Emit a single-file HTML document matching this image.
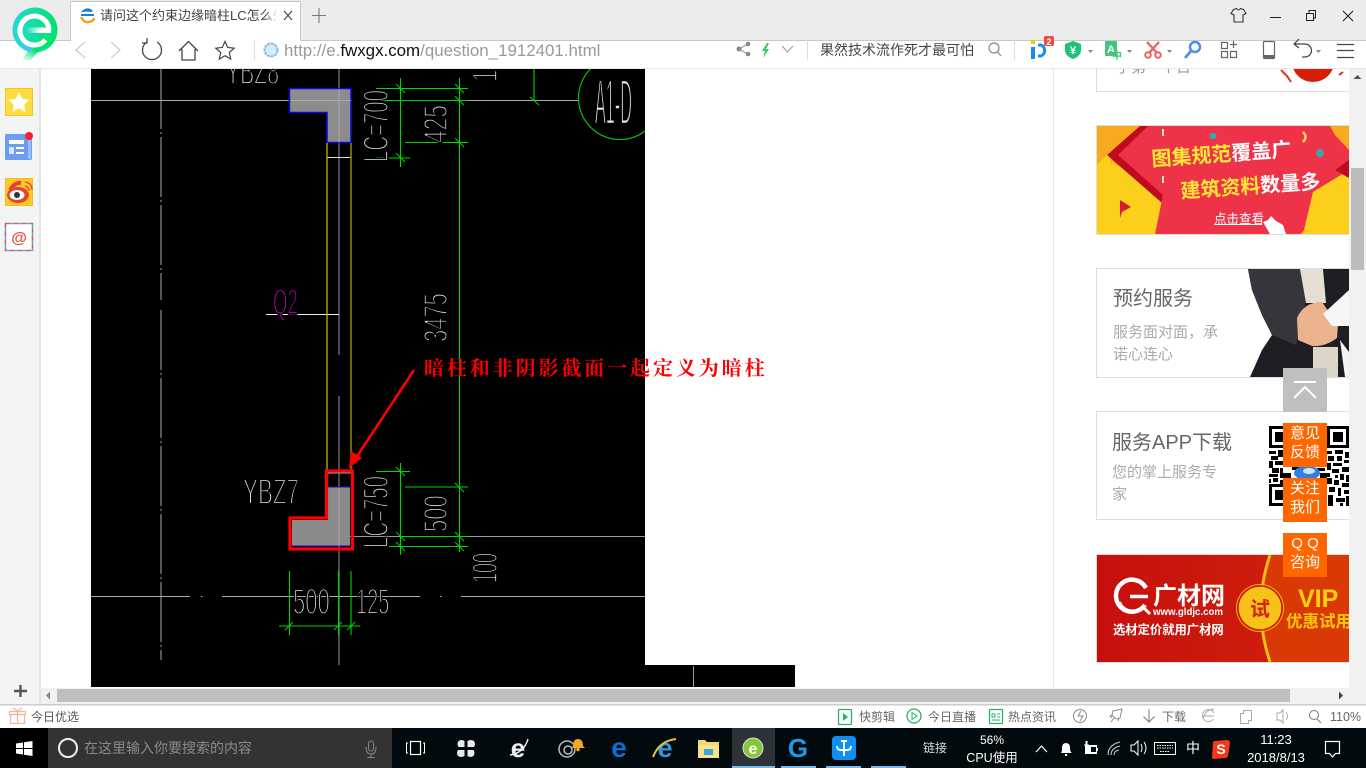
<!DOCTYPE html>
<html><head><meta charset="utf-8"><title>请问这个约束边缘暗柱LC怎么处理</title>
<style>
html,body{margin:0;padding:0;width:1366px;height:768px;overflow:hidden;background:#fff}
svg{position:absolute;left:0;top:0;display:block}
text{font-family:"Liberation Sans","Noto Sans CJK SC",sans-serif}
.cad{font-family:"Liberation Sans",sans-serif;font-size:20px;fill:#e6e6e6;stroke:#000;stroke-width:1.05px;paint-order:fill}
.s{font-size:12px;fill:#666}
.t{font-size:12px;fill:#fff}
.o{font-size:15px;fill:#fff;text-anchor:middle}
</style></head><body>
<svg width="1366" height="768" viewBox="0 0 1366 768" xmlns="http://www.w3.org/2000/svg">
<defs>
<linearGradient id="lg" x1="0" x2="1" y1="0" y2="0"><stop offset="0" stop-color="#28d6d8"/><stop offset="1" stop-color="#00e46a"/></linearGradient>
<linearGradient id="bar" x1="0" x2="1" y1="0" y2="0"><stop offset="0" stop-color="#fff" stop-opacity="0"/><stop offset=".6" stop-color="#fff"/><stop offset="1" stop-color="#fff"/></linearGradient>
<linearGradient id="tail" x1="1" x2="0" y1="0" y2="1"><stop offset="0" stop-color="#00e46a"/><stop offset=".6" stop-color="#00e46a"/><stop offset="1" stop-color="#fff"/></linearGradient>
<linearGradient id="fade" x1="0" x2="1"><stop offset="0" stop-color="#fff" stop-opacity="0"/><stop offset="1" stop-color="#fff"/></linearGradient>
<linearGradient id="red5" x1="0" x2="1"><stop offset="0" stop-color="#c70f0d"/><stop offset="1" stop-color="#d0240a"/></linearGradient>
<clipPath id="cadclip"><rect x="91" y="69" width="554" height="618"/></clipPath>
<clipPath id="ad2"><rect x="1097" y="126" width="252" height="108"/></clipPath>
<clipPath id="ad3"><rect x="1097" y="269" width="252" height="108"/></clipPath>
<clipPath id="ad5"><rect x="1097" y="555" width="252" height="107"/></clipPath>
</defs>

<!-- CAD -->
<rect x="91" y="69" width="554" height="618" fill="#000"/>
<rect x="645" y="665" width="150" height="22" fill="#000"/>
<rect x="693" y="666" width="1" height="21" fill="#999"/>
<g clip-path="url(#cadclip)">
<g fill="none" stroke-width="1">
<path d="M91 100.500H290M468 100.500H578" stroke="#aaa"/>
<path d="M161 69V300M161 310V660" stroke="#aaa" stroke-dasharray="60 3 2 3"/>
<path d="M339 69V142M339 142V355M339 396V665" stroke="#999"/>
<path d="M91 596.500H190M222 596.500H420M461 596.500H645" stroke="#aaa"/>
<path d="M201 596.500h1.500M440 596.500h1.500" stroke="#aaa"/>
<path d="M339 536.500H645" stroke="#999"/>
<path d="M266 314.500H339" stroke="#eee"/>
<path d="M327 157.500H351" stroke="#ddd"/>
</g>
<path d="M289.500 88.500H351V142.500H327V112.500H289.500Z" fill="#8c8c8c" stroke="#0a0ae0" stroke-width="1.500"/>
<path d="M291 100.500H351M339 89V142" stroke="#aaa" stroke-width="1"/>
<path d="M327 143V471" stroke="#c8b400" stroke-width="1.300"/>
<path d="M351 143V471" stroke="#a8a000" stroke-width="1.300"/>
<path d="M328 487H350V546H292V520H328Z" fill="#8a8a8a"/>
<path d="M328 487H350M292 546H350M291 517H326" stroke="#1010e0" stroke-width="1" fill="none"/>
<path d="M339 488V546" stroke="#aaa"/>
<path d="M327 473H351" stroke="#aaa" stroke-width="1"/>
<path d="M326.500 471H352.500V549H290V518H326.500Z" fill="none" stroke="#f00" stroke-width="3.200"/>
<g fill="none" stroke="#00d800" stroke-width="1.100">
<path d="M400.500 78V167M376 88.500H468M376 100.500H468M405 142.500H468M376 158H410M459.500 78V552"/>
<path d="M400.500 463V555M376 471.500H410M405 487H468M400 536.500H468M388 546.500H468"/>
<path d="M279 626H360M289.500 571V635M338.500 571V635M351 571V635"/>
<path d="M534 69V101M530 97l9 8"/>
<circle cx="620" cy="98" r="41.500"/>
<path d="M396 84l9 9M455 84l9 9M455 96l9 9M455 138l9 9M396 153l9 9M396 467l9 9M396 532l9 9M396 542l9 9M455 483l9 9M455 532l9 9M455 542l9 9" stroke-width=".9"/>
<path d="M285 630l8 -8M334 630l8 -8M347 630l8 -8" stroke-width=".9"/>
</g>
<text class="cad" transform="translate(226,84) scale(1.06,1.82)">YBZ8</text>
<text class="cad" transform="translate(595,124) scale(.81,3.2)" style="stroke-width:.8px">A1-D</text>
<text class="cad" style="fill:#d000d0" transform="translate(273,314) scale(.93,1.75)">Q2</text>
<text class="cad" transform="translate(388,162) rotate(-90) scale(1.02,1.75)">LC=700</text>
<text class="cad" transform="translate(447,143) rotate(-90) scale(1.14,1.68)">425</text>
<text class="cad" transform="translate(447,342) rotate(-90) scale(1.1,1.68)">3475</text>
<text class="cad" transform="translate(497,82) rotate(-90) scale(1.1,1.75)">125</text>
<text class="cad" transform="translate(243,504) scale(1.12,1.82)">YBZ7</text>
<text class="cad" transform="translate(388,548) rotate(-90) scale(1.02,1.75)">LC=750</text>
<text class="cad" transform="translate(447,532) rotate(-90) scale(1.1,1.68)">500</text>
<text class="cad" transform="translate(497,583) rotate(-90) scale(.9,1.75)">100</text>
<text class="cad" transform="translate(293,614) scale(1.1,1.82)">500</text>
<text class="cad" transform="translate(356,614) scale(1,1.82)">125</text>
<path d="M414 370L354 461" stroke="#f00" stroke-width="2.600" fill="none"/>
<path d="M349 468L351 451L362 458Z" fill="#f00"/>
</g>
<text x="424" y="375" style="font-family:'Noto Serif CJK SC','Liberation Serif',serif;font-weight:700;font-size:20px;letter-spacing:2.9px;fill:#f00">暗柱和非阴影截面一起定义为暗柱</text>

<!-- separator column -->
<rect x="1053" y="69" width="1" height="619" fill="#e6e6e6"/>

<!-- ad 1 -->
<path d="M1096.500 69V91.500H1349" fill="none" stroke="#ddd"/>
<text x="1116" y="72" style="font-size:15px;fill:#999">手第一个日</text>
<ellipse cx="1313" cy="62" rx="21" ry="20" fill="#d81e06"/>
<path d="M1281 70l6 6 4 6M1343 72l-4 3" stroke="#e0301a" stroke-width="2" fill="none"/>

<!-- ad 2 -->
<rect x="1096.500" y="125.500" width="253" height="109" fill="#f8a91d" stroke="#ddd"/>
<g clip-path="url(#ad2)">
<path d="M1097 165L1112 150L1097 290ZM1112 162L1165 195V234H1097V200Z" fill="#fdcf1d"/>
<path d="M1107 155L1140 126H1170L1162 203Z" fill="#bf0a20"/>
<path d="M1118 155L1148 126H1330L1349 146V192L1300 234H1155L1163 195Z" fill="#ee3348"/>
<path d="M1313 192L1349 170V234H1303Z" fill="#fdcf1d"/>
<path d="M1330 126H1349V150L1335 135Z" fill="#f8a91d"/>
<path d="M1318 126L1349 160V178L1335 170L1349 160Z" fill="#bf0a20"/>
<path d="M1120 200L1131 207L1122 212L1120 218Z" fill="#d51c30"/>
<circle cx="1213" cy="136" r="3.500" fill="#3fa3a8"/><circle cx="1320" cy="153" r="4" fill="#3fa3a8"/>
<rect x="1162" y="129" width="2" height="7" fill="#ffe9b0"/><rect x="1162" y="176" width="2" height="7" fill="#ffe9b0"/>
<path d="M1303 132q5 5 0 10" stroke="#ffd45a" stroke-width="2.400" fill="none"/>
<text transform="translate(1152,166) rotate(-4)" style="font-size:20px;font-weight:700;fill:#ffe936">图集规范<tspan fill="#fff">覆盖广</tspan></text>
<text transform="translate(1181,198) rotate(-4)" style="font-size:20px;font-weight:700;fill:#ffe936">建筑资料<tspan fill="#fff">数量多</tspan></text>
<text x="1214" y="223" style="font-size:12.500px;fill:#fff">点击查看</text>
<rect x="1214" y="224" width="48" height="1" fill="#fff"/>
<path d="M1263 222l5 -2 3 -4 5 5 7 4 3 9h-16z" fill="#fff"/>
</g>

<!-- ad 3 -->
<rect x="1096.500" y="268.500" width="253" height="109" fill="#fff" stroke="#ddd"/>
<text x="1113" y="305" style="font-size:20px;fill:#666">预约服务</text>
<text x="1113" y="337" style="font-size:15px;fill:#aaa">服务面对面，承</text>
<text x="1113" y="359" style="font-size:15px;fill:#aaa">诺心连心</text>
<g clip-path="url(#ad3)">
<path d="M1248 269H1349V377H1250L1262 350L1272 335L1262 315L1252 290Z" fill="#1e1d24"/>
<path d="M1248 269H1300L1306 300L1296 345L1272 335L1262 315L1252 290Z" fill="#35353c"/>
<path d="M1300 269H1323L1326 303H1306Z" fill="#e6dfd4"/>
<path d="M1313 347H1338L1338 377H1313Z" fill="#dcd6c8"/>
<path d="M1297 318Q1304 302 1322 302L1338 325L1337 338Q1325 347 1312 346L1298 340Z" fill="#eab38d"/>
<path d="M1323 314L1349 290V326L1332 326Z" fill="#f8f5f6"/>
<path d="M1340 340L1349 352V377H1345Z" fill="#f6f3f4"/>
</g>

<!-- ad 4 -->
<rect x="1096.500" y="411.500" width="253" height="108" fill="#fff" stroke="#ddd"/>
<text x="1112" y="449" style="font-size:20px;fill:#666">服务APP下载</text>
<text x="1112" y="477" style="font-size:15px;fill:#aaa">您的掌上服务专</text>
<text x="1112" y="499" style="font-size:15px;fill:#aaa">家</text>
<g fill="#000">
<path fill-rule="evenodd" d="M1269 426h22v22h-22zM1272 429v16h16v-16zM1275 432h10v10h-10zM1327 426h22v22h-22zM1330 429v16h16v-16zM1333 432h10v10h-10zM1269 484h22v22h-22zM1272 487v16h16v-16zM1275 490h10v10h-10z"/>
<path d="M1269 451h7v3h-7zM1278 450h5v7h-5zM1271 456h7v4h-7zM1269 461h4v7h-4zM1275 461h8v4h-8zM1272 468h7v5h-7zM1269 474h9v3h-9zM1280 468h3v10h-3zM1273 478h5v4h-5zM1280 480h3v4h-3zM1269 479h2v4h-2z"/>
<path d="M1327 451h5v3h-5zM1335 450h8v4h-8zM1345 452h4v6h-4zM1328 456h6v5h-6zM1337 456h5v5h-5zM1344 460h5v3h-5zM1327 463h4v7h-4zM1333 463h9v3h-9zM1342 467h7v5h-7zM1332 469h7v4h-7zM1327 473h3v4h-3zM1327 478h5v6h-5zM1335 475h3v3h-3zM1340 474h4v6h-4zM1346 475h3v7h-3zM1334 480h5v5h-5zM1342 483h7v4h-7zM1329 487h6v5h-6zM1338 488h3v8h-3zM1344 490h5v4h-5zM1328 495h5v11h-5zM1336 498h9v4h-9zM1346 496h3v10h-3zM1340 503h3v3h-3z"/>
<path d="M1292 467h8v3h-8zM1317 468h8v3h-8zM1320 473h7v5h-7zM1283 473h8v5h-8z"/>
</g>
<ellipse cx="1307" cy="473" rx="13" ry="7" fill="#2f7fe6"/><ellipse cx="1309" cy="471" rx="6" ry="3" fill="#cfe4ff"/>

<!-- ad 5 -->
<rect x="1096.500" y="554.500" width="253" height="108" fill="url(#red5)" stroke="#ddd"/>
<g clip-path="url(#ad5)">
<path d="M1270 555Q1252 608 1270 662H1349V555Z" fill="#d83905"/>
<path d="M1270 555Q1252 608 1270 662" stroke="#eec012" stroke-width="3" fill="none"/>
<circle cx="1260" cy="608" r="22" fill="#f7c318" stroke="#cf1c08" stroke-width="1.500"/>
<circle cx="1260" cy="608" r="23.500" fill="none" stroke="#efb40f" stroke-width="1"/>
<text x="1260" y="616" text-anchor="middle" style="font-size:20px;font-weight:700;fill:#d32108">试</text>
<path d="M1146 588A16 16 0 1 0 1145 605" fill="none" stroke="#fff" stroke-width="4.500"/>
<path d="M1120 602A13 13 0 0 0 1136 610" fill="none" stroke="#fff" stroke-width="2"/>
<path d="M1130 596.500H1148" stroke="#fff" stroke-width="3.500"/>
<path d="M1143 607l7 7" stroke="#fff" stroke-width="3"/>
<text x="1153" y="604" style="font-size:24px;font-weight:700;fill:#fff">广材网</text>
<text x="1153" y="615" style="font-size:10px;font-weight:700;fill:#fff" textLength="70" lengthAdjust="spacingAndGlyphs">www.gldjc.com</text>
<text x="1113" y="634" style="font-size:12.300px;font-weight:700;fill:#fff">选材定价就用广材网</text>
<text x="1298" y="607" style="font-size:25px;font-weight:700;fill:#ffd20a">VIP</text>
<text x="1286" y="627" style="font-size:16.500px;font-weight:700;fill:#ffc80a">优惠试用</text>
</g>

<!-- floating buttons -->
<rect x="1283" y="368" width="44" height="44" fill="#bfbfbf"/>
<path d="M1294 382H1316M1294 398L1305 387L1316 398" fill="none" stroke="#fff" stroke-width="2"/>
<rect x="1283" y="423" width="44" height="44" fill="#ff6600"/>
<rect x="1283" y="478" width="44" height="44" fill="#ff6600"/>
<rect x="1283" y="533" width="44" height="44" fill="#ff6600"/>
<text class="o" x="1305" y="438">意见</text><text class="o" x="1305" y="457">反馈</text>
<text class="o" x="1305" y="493">关注</text><text class="o" x="1305" y="512">我们</text>
<text class="o" x="1305" y="548">Q Q</text><text class="o" x="1305" y="567">咨询</text>

<!-- vertical scrollbar -->
<rect x="1349" y="69" width="17" height="619" fill="#f1f1f1"/>
<rect x="1351" y="168" width="13" height="102" fill="#bcbcbc"/>
<path d="M1357.500 75l4 4h-8z" fill="#555"/>

<!-- left sidebar -->
<rect x="0" y="69" width="40" height="636" fill="#f3f5f4"/>
<rect x="39" y="69" width="2" height="636" fill="#e4e4e4"/>
<rect x="5.500" y="88.500" width="27" height="27" fill="#fedb3f" stroke="#f8c423"/>
<path d="M19 92l3.200 6.800 7.300 .9 -5.400 5 1.400 7.300 -6.500 -3.600 -6.500 3.600 1.400 -7.300 -5.400 -5 7.300 -.9z" fill="#fff"/>
<rect x="5" y="134" width="27" height="26" rx="1.500" fill="#6d9cf5"/>
<rect x="9" y="140" width="15" height="4" fill="#fff"/><rect x="9" y="147" width="5" height="7" rx="1" fill="#d8e6ff"/><rect x="16" y="147" width="8" height="2" fill="#fff"/><rect x="16" y="152" width="8" height="2" fill="#fff"/>
<rect x="28" y="140" width="3" height="19" fill="#9cbdf8"/>
<circle cx="29" cy="136" r="4" fill="#f5222d"/>
<rect x="5.500" y="178.500" width="27" height="27" fill="#fdc82a" stroke="#f8b91f"/>
<ellipse cx="18" cy="195" rx="11" ry="8" fill="#e8412e"/>
<path d="M10 190q5 -8 11 -7" stroke="#e8412e" stroke-width="4" fill="none"/>
<ellipse cx="17" cy="195" rx="7.500" ry="5" fill="#fff"/><circle cx="17" cy="195" r="3" fill="#333"/>
<path d="M25 186q4 1 4 5M25 182q7 1 7 8" stroke="#e8412e" stroke-width="1.300" fill="none"/>
<rect x="5.500" y="223.500" width="27" height="27" fill="#fff" stroke="#ee5a4a" stroke-width="1.600" stroke-dasharray="4 4"/>
<rect x="5.500" y="223.500" width="27" height="27" fill="none" stroke="#58b0f0" stroke-width="1.600" stroke-dasharray="4 4" stroke-dashoffset="4"/>
<text x="19" y="243" text-anchor="middle" style="font-size:16px;font-weight:700;fill:#e8503c">@</text>

<!-- horizontal scrollbar -->
<rect x="41" y="688" width="1325" height="16" fill="#f1f1f1"/>
<rect x="57" y="689" width="1233" height="13" fill="#bfbfbf"/>
<path d="M46 695.500l4 -4v8z" fill="#888"/><path d="M1343 695.500l-4 -4v8z" fill="#444"/>
<path d="M14 691H27M20.500 685V697" stroke="#555" stroke-width="2.400"/>

<!-- status bar -->
<rect x="0" y="704" width="1366" height="24" fill="#fff"/>
<rect x="0" y="704" width="1366" height="1.500" fill="#ccc"/>
<g fill="none" stroke="#f6b59a" stroke-width="1.200">
<rect x="10.500" y="714.500" width="14" height="9"/><rect x="9.500" y="711.500" width="16" height="3"/>
<path d="M17.500 711V724M13 708l4.500 3 4.500 -3"/></g>
<text class="s" x="31" y="721" style="fill:#555">今日优选</text>
<rect x="838.500" y="709.500" width="13" height="15" rx="1" fill="#fff" stroke="#27b36a" stroke-width="1.300"/><path d="M843 713l5 4 -5 4z" fill="#27b36a"/>
<text class="s" x="859" y="721">快剪辑</text>
<circle cx="914" cy="716" r="7" fill="none" stroke="#27b36a" stroke-width="1.300"/><path d="M912 712.500l5 3.500 -5 3.500z" fill="none" stroke="#27b36a"/>
<text class="s" x="928" y="721">今日直播</text>
<rect x="989.500" y="709.500" width="13" height="14" rx="1" fill="none" stroke="#27b36a" stroke-width="1.300"/><path d="M992 714h3v3h-3zM997 714h3M997 717h3M992 720h8" fill="none" stroke="#27b36a"/>
<text class="s" x="1008" y="721">热点资讯</text>
<circle cx="1080" cy="716" r="6.500" fill="none" stroke="#888"/><path d="M1081 711l-3 5h5l-3 5" fill="none" stroke="#888"/>
<path d="M1111 722l3 -4M1113 711l9 -2 -2 9 -4 1 -4 -4zM1112 715l-2 1 2 2M1119 718l-1 3" fill="none" stroke="#888"/>
<path d="M1149 709V722M1143.500 716.500l5.500 5.500 5.500 -5.500" fill="none" stroke="#777"/>
<text class="s" x="1162" y="721">下载</text>
<path d="M1214 713a6 6 0 1 0 -.5 6M1203 716h11M1214 709q-8 0 -11 10" fill="none" stroke="#aaa"/>
<path d="M1240.500 713.500h3v-3h8v10h-3v3h-8z" fill="none" stroke="#aaa"/>
<path d="M1277 713h3l3 -3v13l-3 -3h-3zM1286 712q3 4 0 8" fill="none" stroke="#aaa"/>
<circle cx="1314" cy="715" r="4.500" fill="none" stroke="#777"/><path d="M1317 719l4 4" stroke="#777"/>
<text class="s" x="1330" y="721" style="font-size:12.500px">110%</text>

<!-- taskbar -->
<rect x="0" y="728" width="1366" height="40" fill="#020a0e"/>
<rect x="0" y="728" width="48" height="40" fill="#000"/>
<rect x="48" y="728" width="344" height="40" fill="#333"/>
<path d="M16 743.500l7 -1V748h-7zM24 742.300l8.500 -1.300V748H24zM16 749h7v5.500l-7 -1zM24 749h8.500v7l-8.500 -1.300z" fill="#fff"/>
<circle cx="68" cy="748" r="9" fill="none" stroke="#eee" stroke-width="2"/>
<text x="84" y="753" style="font-size:14px;fill:#8a8a8a">在这里输入你要搜索的内容</text>
<rect x="368.500" y="741" width="5" height="10" rx="2.500" fill="none" stroke="#888"/><path d="M366 747q0 7 5 7t5 -7M371 754v3M367.500 757.500h7" fill="none" stroke="#888"/>
<rect x="410.500" y="741.500" width="10" height="13" fill="none" stroke="#fff" stroke-width="1.200"/><path d="M408 743h-1.500v10H408M423 743h1.500v10H423" fill="none" stroke="#fff"/>
<path d="M464.500 747V741q-3 -2 -6 0 -2 3 0 6zM467.500 747H474q2 -3 0 -6 -3 -2 -6.500 0zM464.500 750H458q-2 3 0 6 3 2 6.500 0zM467.500 750V756q3 2 6 0 2 -3 0 -6z" fill="#e8e8e8"/>
<text x="518" y="757" text-anchor="middle" style="font-size:26px;fill:#eee;font-weight:700">e</text>
<path d="M510 755q14 -2 18 -16" stroke="#eee" stroke-width="1.400" fill="none"/>
<circle cx="567" cy="749" r="8" fill="none" stroke="#bbb" stroke-width="1.500"/><circle cx="568" cy="750" r="4" fill="none" stroke="#bbb" stroke-width="1.500"/>
<path d="M573 746q0 -7 5 -7t5 7l2 2h-14z" fill="#f0a820"/><circle cx="578" cy="749.500" r="1.800" fill="#f0a820"/>
<text x="619" y="757" text-anchor="middle" style="font-size:28px;fill:#0b6fd8;font-weight:700">e</text>
<text x="665" y="757" text-anchor="middle" style="font-size:27px;fill:#2f9ae4;font-weight:700">e</text>
<path d="M653 757q6 -16 23 -18" stroke="#e8c230" stroke-width="2" fill="none"/>
<path d="M698 740h7l2 2h12v16h-21z" fill="#f5d77a"/><rect x="698" y="745" width="21" height="13" fill="#f9e08a"/><rect x="704" y="749" width="9" height="6" fill="#3aa5dc"/>
<rect x="732" y="728" width="43" height="40" fill="#2c3236"/>
<circle cx="753" cy="748" r="10" fill="#86c63a" stroke="#ddd"/><text x="753" y="754" text-anchor="middle" style="font-size:16px;fill:#fff;font-weight:700">e</text>
<text x="798" y="757" text-anchor="middle" style="font-size:26px;font-weight:700;fill:#1a9be6">G</text>
<rect x="832" y="736" width="24" height="24" rx="4" fill="#0f8ff2"/><path d="M844 740V756M837 746q0 4 4 4h6q4 0 4 -4M841 741h6" fill="none" stroke="#fff" stroke-width="2"/>
<rect x="732" y="766" width="43" height="2" fill="#76b9ed"/><rect x="781" y="766" width="35" height="2" fill="#76b9ed"/><rect x="826" y="766" width="35" height="2" fill="#76b9ed"/><rect x="871" y="766" width="35" height="2" fill="#76b9ed"/>
<text class="t" x="923" y="752" style="fill:#ddd">链接</text>
<text class="t" x="992" y="744" text-anchor="middle">56%</text>
<text class="t" x="992" y="762" text-anchor="middle" style="font-size:12.500px">CPU使用</text>
<path d="M1036 752l5.500 -6 5.500 6" fill="none" stroke="#fff" stroke-width="1.200"/>
<path d="M1061 753q1 -1 1 -5 0 -5 4 -5t4 5q0 4 2 5zM1065 754h2v2h-2z" fill="#fff"/>
<path d="M1084 745h5M1086 741v4M1087 741v4" stroke="#fff" stroke-width="1" fill="none"/><rect x="1085" y="745" width="12" height="9" fill="#fff"/><rect x="1097" y="748" width="1" height="3" fill="#fff"/><rect x="1091" y="747" width="5" height="5" fill="#020a0e"/>
<path d="M1108 755q0 -10 12 -13M1111 755q0 -7 9 -9M1114 755q0 -4 5 -5M1118 755v.1" fill="none" stroke="#ccc" stroke-width="1.100"/>
<path d="M1131 745h3l4 -4v14l-4 -4h-3zM1141 744q2 4 0 8M1144 742q4 6 0 12" fill="none" stroke="#fff"/>
<rect x="1154.500" y="742.500" width="21" height="12" fill="none" stroke="#fff"/><path d="M1157 745.500h16M1157 748h16M1160 751.500h10" stroke="#fff" stroke-dasharray="1.500 1"/>
<text class="t" x="1186" y="753" style="font-size:14px">中</text>
<path d="M1215 741l12 -1q3 0 3 3l-2 13q-1 2 -3 2l-11 1q-2 0 -2 -2l1 -14q0 -2 2 -2z" fill="#f03a1a"/><text x="1221" y="754" text-anchor="middle" style="font-size:14px;font-weight:700;fill:#fff">S</text>
<text class="t" x="1276" y="744" text-anchor="middle" style="font-size:13px">11:23</text>
<text class="t" x="1276" y="762" text-anchor="middle" style="font-size:13px">2018/8/13</text>
<path d="M1325.500 741.500h14v12h-4l-3 3.500 -3 -3.500h-4z" fill="none" stroke="#fff" stroke-width="1.200"/>

<!-- top chrome -->
<rect x="0" y="0" width="1366" height="69" fill="#fff"/>
<rect x="0" y="0" width="1366" height="30" fill="#ececec"/>
<rect x="0" y="30" width="1366" height="0" fill="#ececec"/>
<rect x="0" y="30" width="1366" height="10" fill="#ececec"/>
<rect x="0" y="40" width="1366" height="1" fill="#c8c8c8"/>
<rect x="0" y="68" width="1366" height="1" fill="#e6e6e6"/>
<path d="M70.500 41V1.500H300.500V41" fill="#fff" stroke="#c8c8c8"/>
<rect x="71" y="38" width="229" height="4" fill="#fff"/>
<path d="M93 11a7 7 0 0 0 -12 2q2 -2 10 -1z" fill="#1a80d8"/><path d="M81 15h13" stroke="#1a80d8" stroke-width="2"/>
<path d="M81 17q3 6 8 5t5 -4" fill="none" stroke="#f0a020" stroke-width="2.400"/>
<text x="100" y="20" style="font-size:13px;fill:#444">请问这个约束边缘暗柱LC怎么处理</text>
<rect x="265" y="6" width="12" height="24" fill="url(#fade)"/><rect x="277" y="6" width="22" height="24" fill="#fff"/>
<path d="M284 11l8 9M292 11l-8 9" stroke="#444" stroke-width="1.100"/>
<path d="M319 8V23M312 15.500H326" stroke="#777" stroke-width="1.100"/>
<!-- logo -->
<path d="M56 36Q50 46 40 50L30 60H22L29 49L40 42Z" fill="url(#tail)"/>
<circle cx="35" cy="30" r="22.500" fill="url(#lg)"/>
<path d="M20 46Q26 52 33 52L40 47L28 42Z" fill="#38c8f4"/>
<path d="M56 36Q50 46 40 50L30 60H22L33 49L44 38Z" fill="url(#tail)"/>
<path d="M49 30.500A14.500 14.500 0 1 0 45.500 40" fill="none" stroke="#fff" stroke-width="5"/>
<rect x="26" y="27.500" width="25" height="5.500" fill="url(#bar)"/>
<!-- nav -->
<path d="M85 42l-9 8 9 8M111 42l9 8 -9 8" fill="none" stroke="#ccc" stroke-width="1.200"/>
<path d="M147 42a9.500 9.500 0 1 0 10 0M147 38v5h-5" fill="none" stroke="#444" stroke-width="1.300"/>
<path d="M179 51L188.500 41.500 198 51M182 49V60H195V49" fill="none" stroke="#444" stroke-width="1.300"/>
<path d="M225 41.500l2.700 6 6.500 .7 -4.900 4.300 1.400 6.500 -5.700 -3.300 -5.700 3.300 1.400 -6.500 -4.900 -4.300 6.500 -.7z" fill="none" stroke="#444" stroke-width="1.200"/>
<rect x="254" y="40" width="1" height="20" fill="#ddd"/>
<circle cx="271" cy="50" r="6.500" fill="#d5ecfb" stroke="#7fbdec" stroke-width="2" stroke-dasharray="3 .8"/>
<text x="284" y="56" style="font-size:16.900px;fill:#999">http://e.<tspan fill="#111">fwxgx.com</tspan>/question_1912401.html</text>
<circle cx="748" cy="44" r="2.300" fill="#888"/><circle cx="748" cy="54" r="2.300" fill="#888"/><circle cx="739" cy="49" r="2.500" fill="#888"/><path d="M748 44l-9 5 9 5" fill="none" stroke="#888"/>
<path d="M767 43l-5 8h3l-2 7 6 -9h-3l3 -6z" fill="#3cc85a"/>
<path d="M782 46l5.500 6 5.500 -6" fill="none" stroke="#999"/>
<rect x="807" y="40" width="1" height="20" fill="#ddd"/>
<text x="820" y="55" style="font-size:14px;fill:#444">果然技术流作死才最可怕</text>
<circle cx="994" cy="48" r="5" fill="none" stroke="#888" stroke-width="1.200"/><path d="M997.500 52l3.500 4" stroke="#888" stroke-width="1.200"/>
<rect x="1014" y="40" width="1" height="20" fill="#ddd"/>
<rect x="1031" y="40" width="4" height="4" fill="#f5c518"/><rect x="1031" y="47" width="4" height="12" fill="#1490e8"/>
<path d="M1038 45h3a6 6 0 0 1 0 11h-3" fill="none" stroke="#1490e8" stroke-width="3"/>
<rect x="1044" y="36" width="10" height="10" rx="2" fill="#ef4a3a"/><text x="1049" y="45" text-anchor="middle" style="font-size:9px;font-weight:700;fill:#fff">2</text>
<path d="M1073 41l8 3v6q0 6 -8 9 -8 -3 -8 -9v-6z" fill="#1fc27a"/><text x="1073" y="54" text-anchor="middle" style="font-size:11px;font-weight:700;fill:#fff">¥</text>
<path d="M1088 50h5l-2.500 3z" fill="#888"/>
<rect x="1105" y="41" width="12" height="15" rx="1" fill="#3fc878"/><text x="1111" y="53" text-anchor="middle" style="font-size:11px;fill:#fff;font-weight:700">A</text>
<text x="1117" y="59" text-anchor="middle" style="font-size:10px;fill:#3fc878;font-weight:700">中</text>
<path d="M1127 50h5l-2.500 3z" fill="#888"/>
<path d="M1147 42l10 11M1159 42l-10 11" stroke="#f06060" stroke-width="2.400"/><circle cx="1148" cy="55" r="2.800" fill="none" stroke="#f06060" stroke-width="2"/><circle cx="1158" cy="55" r="2.800" fill="none" stroke="#f06060" stroke-width="2"/>
<path d="M1167 50h5l-2.500 3z" fill="#888"/>
<circle cx="1195" cy="47" r="5" fill="none" stroke="#4a8ef0" stroke-width="2.500"/><path d="M1191 51l-6 7" stroke="#4a8ef0" stroke-width="2.800"/>
<path d="M1221.500 42.500h6v6h-6zM1221.500 51.500h6v6h-6zM1230.500 51.500h6v6h-6zM1233.500 41v7M1230 44.500h7" fill="none" stroke="#666" stroke-width="1.200"/>
<rect x="1263.500" y="41.500" width="11" height="17" rx="1" fill="none" stroke="#666" stroke-width="1.200"/><rect x="1264" y="55" width="10" height="3" fill="#666"/>
<path d="M1295 44h10a6 6 0 0 1 0 13h-3M1299 39l-5 5 5 4" fill="none" stroke="#444" stroke-width="1.200"/>
<path d="M1316 50h5l-2.500 3z" fill="#888"/>
<path d="M1337 44.500h17M1337 50.500h17M1337 57.500h17" stroke="#444" stroke-width="1.300"/>
<!-- window -->
<path d="M1233.500 9.500l3 -1q2 3 4 0l3 1 2.500 4 -3 1.500v7h-9v-7l-3 -1.500z" fill="none" stroke="#333" stroke-width="1.100"/>
<rect x="1270" y="17" width="11" height="1" fill="#222"/>
<rect x="1306.500" y="13.500" width="7" height="7" fill="none" stroke="#222"/><path d="M1309 13v-2.500h6.500V18H1314" fill="none" stroke="#222"/>
<path d="M1343 11l10 10M1353 11l-10 10" stroke="#222" stroke-width="1.100"/>
</svg>
</body></html>
